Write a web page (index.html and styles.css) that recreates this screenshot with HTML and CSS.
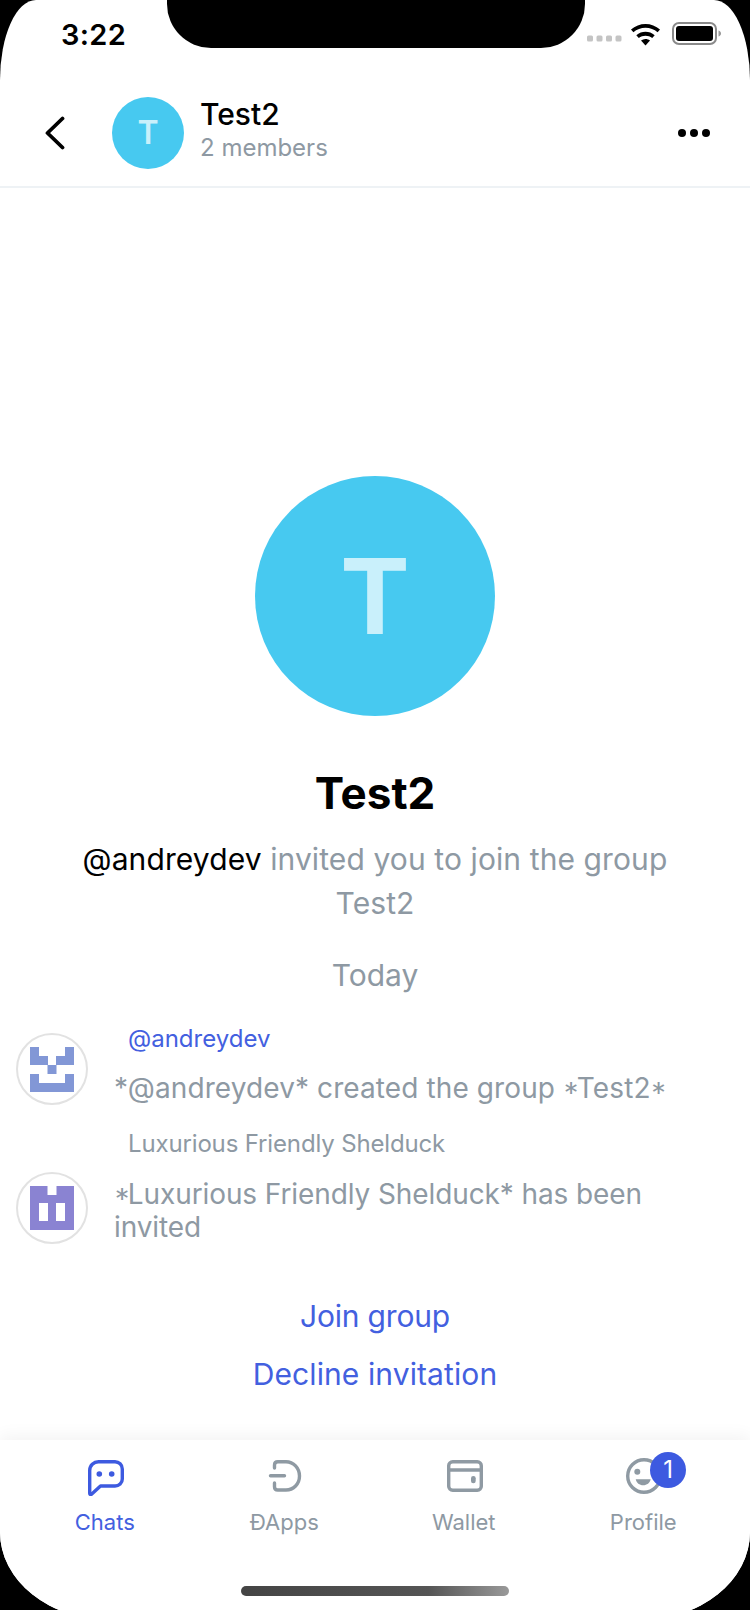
FILE: index.html
```html
<!DOCTYPE html>
<html lang="en">
<head>
<meta charset="utf-8">
<title>Test2</title>
<link rel="stylesheet" href="styles.css">
</head>
<body>
<div class="screen">
  <div class="notch"></div>
  <div class="status">
    <span class="time">3:22</span>
    <div class="status-right">
      <svg class="signal" width="35" height="7" viewBox="0 0 35 7"><g fill="#c4c4c4"><rect x="0" y="0.500" width="6" height="6" rx="1.500"/><rect x="9.500" y="0.500" width="6" height="6" rx="1.500"/><rect x="19" y="0.500" width="6" height="6" rx="1.500"/><rect x="28.500" y="0.500" width="6" height="6" rx="1.500"/></g></svg>
      <svg class="wifi" width="31" height="23" viewBox="0 0 31 23"><path d="M1 6.500C9 -1 22 -1 30 6.500l-2.400 2.800C21 3.300 10 3.300 3.400 9.300z" fill="#000"/><path d="M6.300 12.300c5.300-4.600 13.100-4.600 18.400 0l-2.500 2.800c-3.900-3.200-9.500-3.200-13.400 0z" fill="#000"/><path d="M11 17.400c2.800-2 6.200-2 9 0l-4.500 5.200z" fill="#000"/></svg>
      <svg class="battery" width="50" height="24" viewBox="0 0 50 24"><rect x="1" y="1" width="43" height="21" rx="6" fill="none" stroke="#8a8a8a" stroke-width="2"/><rect x="4" y="4" width="37" height="15" rx="3" fill="#000"/><path d="M46.500 8.500c1.700.5 2.500 1.700 2.500 3s-.8 2.500-2.500 3z" fill="#9a9a9a"/></svg>
    </div>
  </div>
  <header class="topbar">
    <svg class="back" width="22" height="34" viewBox="0 0 22 34"><path d="M18.500 2.500 3.500 17l15 14.500" fill="none" stroke="#000" stroke-width="3.800" stroke-linecap="round" stroke-linejoin="round"/></svg>
    <div class="avatar-small">T</div>
    <div class="titles">
      <div class="title">Test2</div>
      <div class="subtitle">2 members</div>
    </div>
    <svg class="more" width="32" height="8" viewBox="0 0 32 8"><circle cx="4" cy="4" r="4"/><circle cx="16" cy="4" r="4"/><circle cx="28" cy="4" r="4"/></svg>
  </header>
  <main class="content">
    <div class="avatar-big">T</div>
    <h1 class="group-name">Test2</h1>
    <p class="invite"><span class="inviter">@andreydev</span> invited you to join the group Test2</p>
    <div class="date">Today</div>
    <section class="messages">
      <div class="message">
        <svg class="identicon" width="72" height="72" viewBox="0 0 72 72"><circle cx="36" cy="36" r="35" fill="#fff" stroke="#e2e2e2" stroke-width="2"/><g fill="#8297d6"><rect x="14" y="14" width="9" height="18"/><rect x="23" y="23" width="9" height="9"/><rect x="49" y="14" width="9" height="18"/><rect x="40" y="23" width="9" height="9"/><rect x="31.500" y="32" width="9" height="9"/><rect x="14" y="41" width="9" height="18"/><rect x="49" y="41" width="9" height="18"/><rect x="14" y="50" width="44" height="9"/></g></svg>
        <div class="bubble">
          <div class="sender sender-blue">@andreydev</div>
          <div class="text text-first">*@andreydev* created the group <span class="star">*</span>Test2<span class="star">*</span></div>
        </div>
      </div>
      <div class="message message-second">
        <svg class="identicon" width="72" height="72" viewBox="0 0 72 72"><circle cx="36" cy="36" r="35" fill="#fff" stroke="#e2e2e2" stroke-width="2"/><path d="M14 14h17.500v9H40.500v-9H58v44H14z" fill="#8a83d2"/><rect x="23" y="31" width="9" height="18" fill="#fff"/><rect x="40" y="31" width="9" height="18" fill="#fff"/></svg>
        <div class="bubble">
          <div class="sender sender-long">Luxurious Friendly Shelduck</div>
          <div class="text text-second"><span class="star">*</span>Luxurious Friendly Shelduck* has been invited</div>
        </div>
      </div>
    </section>
    <div class="actions">
      <div class="action action-join">Join group</div>
      <div class="action action-decline">Decline invitation</div>
    </div>
  </main>
  <nav class="tabbar">
    <div class="tab tab-active">
      <svg class="tab-icon" width="40" height="40" viewBox="0 0 40 40"><path d="M4.700 37.300V14.500C4.700 9.500 8.700 5.700 13.500 5.700H30c4 0 7.300 3.200 7.300 7.300V23c0 4-3.300 7-7.300 7H15.500L6.500 38.200C5.700 39 4.700 38.500 4.700 37.300z" fill="none" stroke="#3d5ae0" stroke-width="3.400" stroke-linejoin="round"/><circle cx="14.300" cy="18" r="2.800" fill="#3d5ae0"/><circle cx="26.700" cy="18" r="2.800" fill="#3d5ae0"/></svg>
      <span>Chats</span>
    </div>
    <div class="tab">
      <svg class="tab-icon" width="40" height="40" viewBox="0 0 40 40"><path d="M10.500 12V9c0-2 1.300-3.300 3.300-3.300H22C29.500 5.700 35.500 12 35.500 20s-6 14-13.500 14H13.800c-2 0-3.300-1.300-3.300-3.300V27" fill="none" stroke="#8f9aa3" stroke-width="3.400" stroke-linecap="round"/><path d="M6.500 19.700h14" fill="none" stroke="#8f9aa3" stroke-width="3.400" stroke-linecap="round"/></svg>
      <span>ÐApps</span>
    </div>
    <div class="tab">
      <svg class="tab-icon" width="40" height="40" viewBox="0 0 40 40"><rect x="4.700" y="5.700" width="32.600" height="28.600" rx="4" fill="none" stroke="#8f9aa3" stroke-width="3.400"/><path d="M4.700 14h32.600" stroke="#8f9aa3" stroke-width="3.400"/><rect x="27" y="20" width="4.700" height="7.300" rx="2.300" fill="#8f9aa3"/></svg>
      <span>Wallet</span>
    </div>
    <div class="tab">
      <div class="profile-icon">
        <svg class="tab-icon" width="40" height="40" viewBox="0 0 40 40"><circle cx="21" cy="20" r="16.300" fill="none" stroke="#8f9aa3" stroke-width="3.400"/><circle cx="14.300" cy="15.700" r="3" fill="#8f9aa3"/><path d="M12.700 23.300h15c-.8 3.800-3.800 6-7.500 6s-6.700-2.200-7.500-6z" fill="#8f9aa3"/></svg>
        <span class="badge">1</span>
      </div>
      <span>Profile</span>
    </div>
  </nav>
  <div class="home-indicator"></div>
</div>
</body>
</html>
```
FILE: styles.css
```css
* { box-sizing: border-box; margin: 0; padding: 0; }
html, body { width: 750px; height: 1610px; overflow: hidden; background: #000; }
body { font-family: Inter, "Noto Sans", sans-serif; color: #8e99a3; }
.screen { position: relative; width: 750px; height: 1620px; background: #fff; border-radius: 36px 36px 110px 110px / 80px 80px 88px 88px; overflow: hidden; display: flex; flex-direction: column; }
.notch { position: absolute; left: 167px; top: 0; width: 418px; height: 48px; background: #000; border-radius: 0 0 44px 44px; }
.status { height: 81px; flex: none; display: flex; justify-content: space-between; align-items: flex-start; padding: 18px 28px 0 61px; }
.time { font-size: 29px; font-weight: 600; line-height: 34px; color: #000; letter-spacing: 0.3px; }
.status-right { display: flex; align-items: center; gap: 8px; height: 32px; }
.signal { margin-top: 8px; }
.battery { margin-left: 3px; }
.topbar { height: 107px; flex: none; display: flex; align-items: center; padding: 0 40px 0 44px; border-bottom: 2px solid #eef2f5; }
.back { flex: none; margin-top: -2px; }
.avatar-small { flex: none; width: 72px; height: 72px; margin-left: 46px; margin-top: -2px; border-radius: 50%; background: #47c9f0; color: #c9f0fb; font-size: 32px; font-weight: 600; display: flex; align-items: center; justify-content: center; }
.titles { flex: 1; margin-left: 16px; margin-top: -8px; }
.title { font-size: 30px; line-height: 37px; font-weight: 500; color: #000; }
.subtitle { font-size: 24px; line-height: 30px; color: #8e99a3; }
.more { flex: none; margin-top: -2px; }
.content { flex: 1; display: flex; flex-direction: column; align-items: center; padding-top: 288px; }
.avatar-big { width: 240px; height: 240px; border-radius: 50%; background: #47c9f0; color: #c9f0fb; font-size: 104px; font-weight: 700; display: flex; align-items: center; justify-content: center; flex: none; }
.group-name { font-size: 44px; line-height: 56px; font-weight: 700; color: #000; margin-top: 49px; }
.invite { width: 640px; text-align: center; font-size: 30px; line-height: 44px; margin-top: 16px; letter-spacing: 0.1px; }
.inviter { color: #000; }
.date { font-size: 30px; line-height: 44px; margin-top: 28px; }
.messages { width: 100%; margin-top: 27px; padding: 0 16px; display: flex; flex-direction: column; }
.message { display: flex; align-items: flex-end; }
.message-second { margin-top: 24px; }
.identicon { flex: none; }
.bubble { margin-left: 26px; flex: 1; }
.sender { font-size: 24px; line-height: 30px; margin-left: 14px; }
.sender-blue { color: #4360df; }
.sender-long { letter-spacing: -0.15px; }
.text { font-size: 28px; line-height: 33px; width: 570px; }
.text-first { letter-spacing: 0.1px; margin-top: 18px; }
.text-second { letter-spacing: -0.1px; margin-top: 19px; }
.star { font-feature-settings: "case"; font-size: 25px; line-height: 20px; letter-spacing: -2.300px; vertical-align: 1px; }
.actions { display: flex; flex-direction: column; align-items: center; margin-top: 53px; gap: 20px; }
.action { font-size: 30px; line-height: 38px; color: #4360df; }
.action-join { letter-spacing: -0.2px; }
.action-decline { letter-spacing: 0.1px; }
.tabbar { position: absolute; left: 0; right: 0; top: 1440px; height: 180px; padding: 16px 15px 0; display: grid; grid-template-columns: repeat(4, 179.500px); background: #fff; box-shadow: 0 -4px 16px rgba(0,0,0,.05); }
.tab { display: flex; flex-direction: column; align-items: center; font-size: 22px; line-height: 30px; color: #8e99a3; }
.tab-icon { display: block; }
.tab-active { color: #4360df; }
.tab > span { display: block; margin-top: 11px; }
.profile-icon { position: relative; width: 40px; height: 40px; }
.badge { position: absolute; left: 27px; top: -4px; width: 36px; height: 36px; border-radius: 50%; background: #3d5ae0; color: #fff; font-size: 24px; line-height: 36px; text-align: center; }
.home-indicator { position: absolute; left: 241px; top: 1586px; width: 268px; height: 10px; border-radius: 5px; background: linear-gradient(90deg, #444 0%, #555 70%, #999 100%); }
```
